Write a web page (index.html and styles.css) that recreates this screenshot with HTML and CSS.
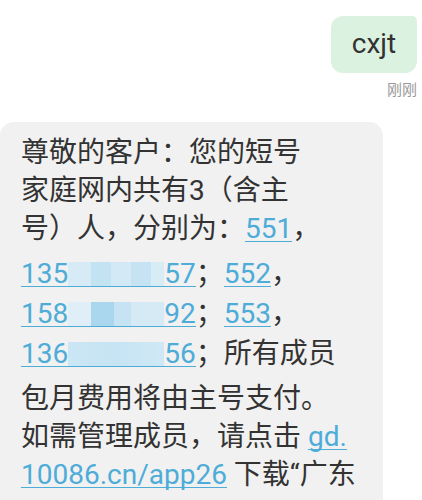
FILE: index.html
```html
<!DOCTYPE html>
<html lang="zh-CN">
<head>
<meta charset="utf-8">
<title>短信</title>
<link rel="stylesheet" href="styles.css">
</head>
<body>
<div class="thread">
  <div class="sent">
    <div class="bubble-out">cxjt</div>
    <div class="time">刚刚</div>
  </div>
  <div class="bubble-in">
    <div class="ln">尊敬的客户：您的短号</div>
    <div class="ln">家庭网内共有3（含主</div>
    <div class="ln">号）人，分别为：<span class="lk">551</span>，</div>
    <div class="ln num first"><span class="lk">135<span class="blur b1"></span>57</span>；<span class="lk">552</span>，</div>
    <div class="ln num"><span class="lk">158<span class="blur b2"></span>92</span>；<span class="lk">553</span>，</div>
    <div class="ln num last"><span class="lk">136<span class="blur b3"></span>56</span>；所有成员</div>
    <div class="ln">包月费用将由主号支付。</div>
    <div class="ln">如需管理成员，请点击 <span class="lk">gd.</span></div>
    <div class="ln"><span class="lk">10086.cn/app26</span> 下载“广东</div>
  </div>
</div>
</body>
</html>
```

FILE: styles.css
```css
html, body {
  margin: 0;
  padding: 0;
  background: #ffffff;
}
body {
  width: 422px;
  height: 500px;
  overflow: hidden;
  font-family: Roboto, "Noto Sans CJK SC", sans-serif;
  color: #333333;
}
.thread {
  display: flex;
  flex-direction: column;
}
.sent {
  display: flex;
  flex-direction: column;
  align-items: flex-end;
  padding-right: 5px;
  padding-top: 16px;
}
.bubble-out {
  width: 86px;
  height: 57px;
  background: #dcf2e1;
  border-radius: 12px 5px 12px 12px;
  display: flex;
  align-items: center;
  justify-content: center;
  font-size: 28px;
  color: #333333;
  box-sizing: border-box;
  padding-bottom: 3px;
}
.time {
  margin-top: 8px;
  font-size: 15px;
  line-height: 16px;
  color: #999999;
  font-family: "Noto Sans CJK SC", sans-serif;
}
.bubble-in {
  margin-top: 25px;
  width: 383px;
  height: 378px;
  overflow: hidden;
  box-sizing: border-box;
  background: #f1f1f1;
  border-radius: 14px 14px 0 0;
  padding: 12px 0 0 21px;
  font-size: 28px;
}
.ln {
  line-height: 38px;
  white-space: nowrap;
}
.ln.num {
  line-height: 40px;
}
.ln.first {
  margin-top: 6px;
}
.ln.last {
  margin-bottom: 6px;
}
.lk {
  display: inline-block;
  color: #4dacd8;
  line-height: 25px;
  border-bottom: 1.5px solid #4dacd8;
}
.blur {
  display: inline-block;
  width: 96px;
  height: 24px;
  vertical-align: -3px;
}
.b1 {
  background: linear-gradient(to right,
    #d6ebf6 0, #d6ebf6 23px,
    #c3e2f2 23px, #c3e2f2 43px,
    #d3eaf6 43px, #d3eaf6 63px,
    #c6e3f3 63px, #c6e3f3 83px,
    #d8ecf6 83px, #d8ecf6 96px);
}
.b2 {
  background: linear-gradient(to right,
    #e0eff7 0, #e0eff7 23px,
    #aad7ee 23px, #aad7ee 46px,
    #c5e3f3 46px, #c5e3f3 63px,
    #d5eaf5 63px, #d5eaf5 96px);
}
.b3 {
  background: linear-gradient(to right,
    #cbe6f4 0, #c6e4f4 50%, #cfe8f5 100%);
}
```
